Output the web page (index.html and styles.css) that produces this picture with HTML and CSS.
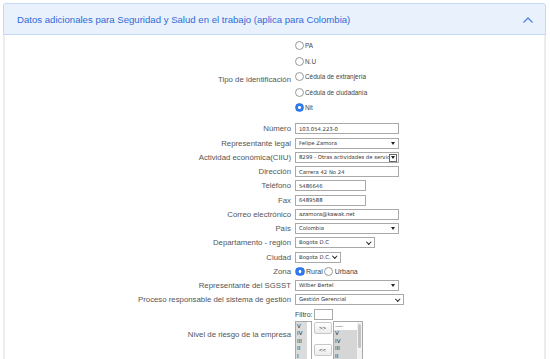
FILE: index.html
```html
<!DOCTYPE html>
<html lang="es">
<head>
  <meta charset="UTF-8" />
  <title>Datos adicionales SST</title>
  <link rel="stylesheet" href="styles.css">
</head>
<body>

  <div class="panel">
    <div class="panel-head">
      <span class="panel-title">Datos adicionales para Seguridad y Salud en el trabajo (aplica para Colombia)</span>
      <svg class="chevron" width="12" height="8" viewBox="0 0 12 8"><path d="M1.5 6.5 L6 2 L10.5 6.5" fill="none" stroke="#4d88e2" stroke-width="1.4"/></svg>
    </div>

    <div class="panel-body">
      <div class="form">

        <div class="lbl">Tipo de identificación</div>
        <div class="radio-list">
          <label class="opt"><span class="radio"></span>PA</label>
          <label class="opt"><span class="radio"></span>N.U</label>
          <label class="opt"><span class="radio"></span>Cédula de extranjería</label>
          <label class="opt"><span class="radio"></span>Cédula de ciudadanía</label>
          <label class="opt"><span class="radio on"></span>Nit</label>
        </div>

        <div class="lbl">Número</div>
        <div><input class="txt w-lg" value="103.054.223-0"></div>

        <div class="lbl">Representante legal</div>
        <div><span class="sel w-lg arrow">Felipe Zamora</span></div>

        <div class="lbl">Actividad económica(CIIU)</div>
        <div><span class="sel w-lg arrow boxed">8299 - Otras actividades de servicio</span></div>

        <div class="lbl">Dirección</div>
        <div><input class="txt w-lg" value="Carrera 42 No 24"></div>

        <div class="lbl">Teléfono</div>
        <div><input class="txt w-md" value="5486646"></div>

        <div class="lbl">Fax</div>
        <div><input class="txt w-md" value="6489588"></div>

        <div class="lbl">Correo electrónico</div>
        <div><input class="txt w-lg" value="azamora@kawak.net"></div>

        <div class="lbl">País</div>
        <div><span class="sel w-lg arrow">Colombia</span></div>

        <div class="lbl">Departamento - región</div>
        <div><span class="sel w-dep caret">Bogota D.C</span></div>

        <div class="lbl">Ciudad</div>
        <div><span class="sel w-sm caret">Bogota D.C.</span></div>

        <div class="lbl">Zona</div>
        <div class="zona">
          <label class="opt-lg"><span class="radio big on"></span>Rural</label>
          <label class="opt-lg"><span class="radio big"></span>Urbana</label>
        </div>

        <div class="lbl">Representante del SGSST</div>
        <div><span class="sel w-lg arrow">Wilber Bertel</span></div>

        <div class="lbl">Proceso responsable del sistema de gestión</div>
        <div><span class="sel w-xl caret">Gestión Gerencial</span></div>

        <div class="lbl">Nivel de riesgo de la empresa</div>
        <div class="picker">
          <div class="filter">Filtro:<input class="txt w-filter"></div>
          <div class="lists">
            <div class="list left">
              <div class="items">
                <div>V</div><div>IV</div><div>III</div><div>II</div><div>I</div>
              </div>
            </div>
            <div class="moves">
              <button class="mv">&gt;&gt;</button>
              <button class="mv">&lt;&lt;</button>
            </div>
            <div class="list right">
              <div class="items">
                <div class="dots">---------</div>
                <div class="hl">V</div><div class="hl">IV</div><div class="hl">III</div><div class="hl">II</div>
              </div>
              <div class="scroll"><div class="thumb"></div></div>
            </div>
          </div>
        </div>

      </div>
    </div>
  </div>

</body>
</html>
```

FILE: styles.css
```css
body {
  margin: 0;
  background-color: #fff;
  font-family: 'Liberation Sans', Arial, sans-serif;
  color: #555;
}

.panel {
  margin: 3px 4px 0 3px;
}

.panel-head {
  height: 30px;
  display: flex;
  align-items: center;
  justify-content: space-between;
  padding: 0 11px 0 13px;
  background-color: #e9f1fd;
  border: 1px solid #c3d7f7;
  border-radius: 3px 3px 0 0;
}

.panel-title {
  font-size: 9.6px;
  color: #2f6bd6;
}

.chevron {
  margin-top: 1px;
}

.panel-body {
  border-left: 2px solid #ececec;
  border-right: 2px solid #ececec;
  height: 330px;
  padding-top: 3px;
}

.form {
  display: grid;
  grid-template-columns: 286px 1fr;
  column-gap: 4px;
  row-gap: 3.25px;
  align-items: center;
}

.lbl {
  text-align: right;
  font-size: 7.8px;
  color: #555;
  white-space: nowrap;
}

/* radios */
.radio-list {
  margin-bottom: 4.5px;
}

.opt {
  height: 15.5px;
  display: flex;
  align-items: center;
  font-size: 6.4px;
  color: #444;
}

.radio {
  width: 7px;
  height: 7px;
  border: 1px solid #999;
  border-radius: 50%;
  background-color: #fff;
  box-sizing: content-box;
  margin-right: 1px;
  flex: none;
}

.radio.on {
  border-color: #2a73e8;
  background: radial-gradient(circle, #fff 0 1.3px, #2f7bf0 1.6px);
}

.zona {
  display: flex;
  align-items: center;
  height: 11px;
}

.opt-lg {
  display: flex;
  align-items: center;
  font-size: 7px;
  color: #444;
  margin-right: 1px;
}

.radio.big {
  width: 7.5px;
  height: 7.5px;
  margin-right: 1.5px;
}

/* inputs and selects */
.txt,
.sel {
  box-sizing: border-box;
  height: 11px;
  border: 1px solid #a9a9a9;
  background-color: #fff;
  font-family: 'DejaVu Sans', Verdana, sans-serif;
  font-size: 5.3px;
  color: #333;
  padding: 0 0 0 3px;
  margin: 0;
  outline: none;
  display: block;
}

.sel {
  position: relative;
  line-height: 9px;
  white-space: nowrap;
  overflow: hidden;
  padding-right: 8px;
}

.sel.arrow::after {
  content: "";
  position: absolute;
  right: 3px;
  top: 3px;
  border-left: 2.5px solid transparent;
  border-right: 2.5px solid transparent;
  border-top: 3.5px solid #222;
}

.sel.boxed {
  padding-right: 4px;
}

.sel.boxed::before {
  content: "";
  position: absolute;
  right: 1px;
  top: 1px;
  width: 6px;
  height: 6px;
  border: 0.5px solid #666;
  background-color: #fff;
}

.sel.caret::after {
  content: "";
  position: absolute;
  right: 4px;
  top: 1.5px;
  width: 2.5px;
  height: 2.5px;
  border-right: 1.4px solid #222;
  border-bottom: 1.4px solid #222;
  transform: rotate(45deg);
}

.w-lg { width: 104px; }
.w-md { width: 71px; }
.w-dep { width: 80px; }
.w-sm { width: 46px; }
.w-xl { width: 109px; }
.w-filter { width: 19px; display: inline-block; vertical-align: middle; margin-left: 1px; }

/* level picker */
.picker {
  height: 51px;
}

.filter {
  font-size: 7px;
  color: #444;
  height: 11px;
  display: flex;
  align-items: center;
}

.lists {
  display: flex;
  margin-top: 1px;
}

.list {
  box-sizing: border-box;
  border: 1px solid #a9a9a9;
  height: 41px;
  font-family: 'DejaVu Sans', Verdana, sans-serif;
  font-size: 5.6px;
  color: #333;
  background-color: #fff;
  display: flex;
}

.list.left {
  width: 17px;
}

.list.left .items {
  width: 11px;
  background-color: #dcdcdc;
  padding-top: 1px;
}

.list.right {
  width: 30px;
}

.list.right .items {
  flex: 1;
  padding-top: 1px;
}

.items div {
  height: 7.6px;
  line-height: 7.6px;
  padding-left: 1px;
}

.items .dots {
  letter-spacing: -1px;
  font-size: 5px;
  color: #777;
}

.items .hl {
  background-color: #d6d6d6;
}

.scroll {
  width: 5px;
  background-color: #f2f2f2;
  padding: 2px 0;
}

.thumb {
  width: 3px;
  height: 24px;
  margin: 0 auto;
  background-color: #c4c4c4;
  border-radius: 2px;
}

.moves {
  width: 21px;
  display: flex;
  flex-direction: column;
  align-items: center;
  gap: 10px;
  padding-top: 1px;
}

.mv {
  width: 18px;
  height: 12px;
  padding: 0;
  border: 1px solid #c8c8c8;
  border-radius: 2px;
  background: linear-gradient(#fff, #ececec);
  font-family: 'Liberation Sans', Arial, sans-serif;
  font-size: 6px;
  color: #333;
}
```
